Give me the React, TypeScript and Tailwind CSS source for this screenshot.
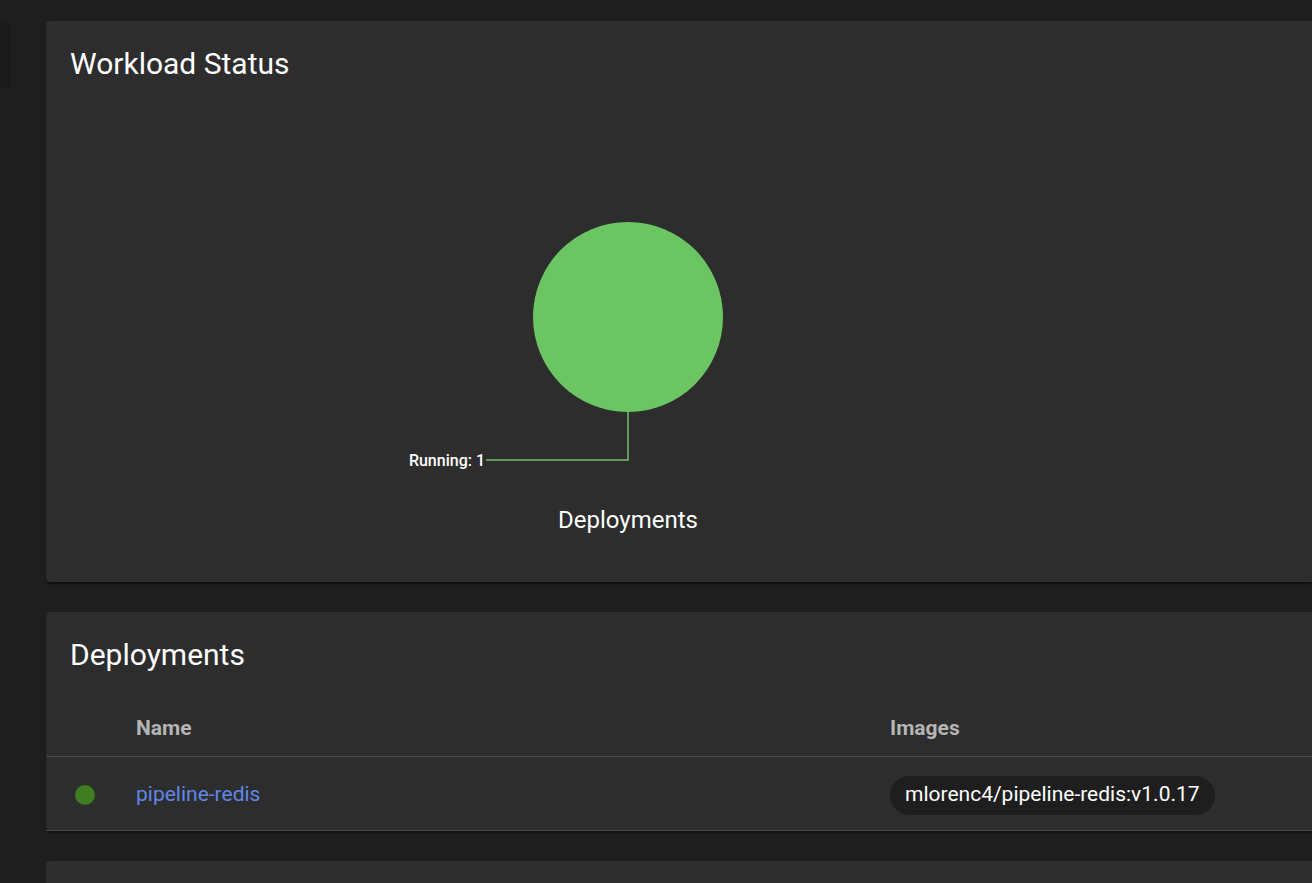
export default function App() {
  return (
    <div
      className="min-h-screen w-full bg-[#1e1e1e] flex overflow-hidden"
      style={{ fontFamily: 'Roboto, "Liberation Sans", sans-serif' }}
    >
      {/* Left nav sliver */}
      <div className="w-[46px] shrink-0 pt-[22px]">
        <div className="w-[10px] h-[66px] bg-[#1b1b1b] rounded-r" />
      </div>

      {/* Main */}
      <div className="flex-1 min-w-0 flex flex-col pt-[21px] gap-[30px]">
        {/* Workload Status card */}
        <div className="bg-[#2d2d2d] rounded-l h-[561px] shadow-[0_2px_2px_rgba(0,0,0,0.5)]">
          <h2 className="px-6 pt-[25px] text-[30px] leading-[36px] text-white">
            Workload Status
          </h2>
          <div className="px-6 pt-[18px]">
            <svg width="1116" height="460" viewBox="0 0 1116 460">
              <circle cx="558" cy="217" r="95" fill="#6cc563" />
              <polyline
                points="558,312 558,360 416,360"
                fill="none"
                stroke="#6cc563"
                strokeWidth="1.5"
              />
              <text
                x="415"
                y="365.5"
                textAnchor="end"
                fill="#ffffff"
                fontSize="16"
                fontWeight="500"
                fontFamily="Roboto, sans-serif"
              >
                Running: 1
              </text>
              <text
                x="558"
                y="428"
                textAnchor="middle"
                fill="#ffffff"
                fontSize="24"
                fontFamily="Roboto, sans-serif"
              >
                Deployments
              </text>
            </svg>
          </div>
        </div>

        {/* Deployments card */}
        <div className="bg-[#2d2d2d] rounded-l shadow-[0_2px_2px_rgba(0,0,0,0.5)]">
          <h2 className="px-6 pt-[25px] text-[30px] leading-[36px] text-white">
            Deployments
          </h2>
          <div className="mt-[26px]">
            <div className="flex items-center h-[58px] pt-[2px] border-b border-[#4a4a4a] text-[21px] font-bold text-[#b5b5b5]">
              <div className="w-[90px] shrink-0" />
              <div className="w-[754px] shrink-0">Name</div>
              <div>Images</div>
            </div>
            <div className="flex items-center h-[74px] pt-[3px] border-b border-[#4a4a4a] text-[21px]">
              <div className="w-[90px] shrink-0 pl-[29px]">
                <div className="w-5 h-5 rounded-full bg-[#3f7e20]" />
              </div>
              <div className="w-[754px] shrink-0 text-[#5f87e8]">pipeline-redis</div>
              <div>
                <span className="inline-flex items-center h-[39px] px-[15px] rounded-full bg-[#1e1e1e] text-white">
                  mlorenc4/pipeline-redis:v1.0.17
                </span>
              </div>
            </div>
          </div>
        </div>

        {/* Next card (cut off) */}
        <div className="bg-[#2d2d2d] rounded-l h-[60px]" />
      </div>
    </div>
  )
}
